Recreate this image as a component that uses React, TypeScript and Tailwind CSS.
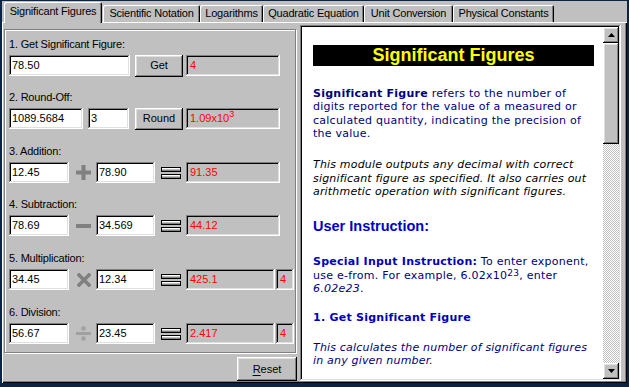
import React from "react";

const raised =
  "shadow-[inset_-1px_-1px_#000,inset_1px_1px_#fff,inset_-2px_-2px_#808080,inset_2px_2px_#dfdfdf]";
const sunken =
  "shadow-[inset_-1px_-1px_#fff,inset_1px_1px_#808080,inset_-2px_-2px_#dfdfdf,inset_2px_2px_#000]";

function Field({ w, v }: { w: string; v: string }) {
  return (
    <div className={`h-[21px] ${w} bg-white ${sunken} flex items-center pl-[3px] text-black shrink-0`}>
      {v}
    </div>
  );
}

function Out({ w, children }: { w: string; children: React.ReactNode }) {
  return (
    <div className={`h-[21px] ${w} bg-[#c0c0c0] ${sunken} flex items-center pl-[4px] text-[#ff0000] shrink-0`}>
      {children}
    </div>
  );
}

function Btn({ label }: { label: string }) {
  return (
    <div className={`h-[22px] w-[48px] bg-[#c0c0c0] ${raised} flex items-center justify-center text-black shrink-0`}>
      {label}
    </div>
  );
}

function Equals() {
  return (
    <svg width="20" height="12" viewBox="0 0 20 12" className="shrink-0">
      <rect x="0" y="0" width="20" height="5" fill="#000" />
      <rect x="1" y="1" width="18" height="1" fill="#fff" />
      <rect x="1" y="2" width="18" height="1" fill="#c0c0c0" />
      <rect x="1" y="3" width="18" height="1" fill="#808080" />
      <rect x="0" y="7" width="20" height="5" fill="#000" />
      <rect x="1" y="8" width="18" height="1" fill="#fff" />
      <rect x="1" y="9" width="18" height="1" fill="#c0c0c0" />
      <rect x="1" y="10" width="18" height="1" fill="#808080" />
    </svg>
  );
}

function Plus() {
  return (
    <svg width="15" height="15" viewBox="0 0 15 15" className="shrink-0">
      <path d="M5.5 0h4v5.5H15v4H9.5V15h-4V9.5H0v-4h5.5z" fill="#808080" />
    </svg>
  );
}
function Minus() {
  return (
    <svg width="15" height="4" viewBox="0 0 15 4" className="shrink-0">
      <rect x="0" y="0" width="15" height="4" fill="#808080" />
    </svg>
  );
}
function Times() {
  return (
    <svg width="14" height="14" viewBox="0 0 14 14" className="shrink-0">
      <path d="M2 2L12 12M12 2L2 12" stroke="#808080" strokeWidth="3.6" strokeLinecap="square" />
    </svg>
  );
}
function Divide() {
  return (
    <svg width="15" height="15" viewBox="0 0 15 15" className="shrink-0">
      <rect x="0" y="6" width="15" height="3" fill="#a0a0a0" />
      <rect x="5.5" y="0.5" width="4" height="4" fill="#a0a0a0" />
      <rect x="5.5" y="10.5" width="4" height="4" fill="#a0a0a0" />
    </svg>
  );
}

function Label({ text, mt }: { text: string; mt: string }) {
  return <div className={`${mt} h-[13px] leading-[13px] tracking-[-0.2px] text-black`}>{text}</div>;
}

function OpRow({
  a,
  b,
  op,
  res,
  sig,
}: {
  a: string;
  b: string;
  op: React.ReactNode;
  res: string;
  sig?: string;
}) {
  return (
    <div className="mt-[4px] flex items-center h-[21px]">
      <Field w="w-[60px]" v={a} />
      <div className="w-[27px] flex justify-center pl-[2px] shrink-0">{op}</div>
      <Field w="w-[59px]" v={b} />
      <div className="ml-[6px] mr-[5px]">
        <Equals />
      </div>
      {sig ? (
        <>
          <Out w="w-[89px]">{res}</Out>
          <div className="ml-[1px]">
            <Out w="w-[18px]">{sig}</Out>
          </div>
        </>
      ) : (
        <Out w="w-[94px]">{res}</Out>
      )}
    </div>
  );
}

function ScrollBtn({ up }: { up: boolean }) {
  return (
    <div className={`h-[16px] w-[16px] bg-[#c0c0c0] ${raised} flex items-center justify-center shrink-0`}>
      <svg width="7" height="4" viewBox="0 0 7 4">
        {up ? <path d="M3.5 0L7 4H0z" fill="#000" /> : <path d="M0 0H7L3.5 4z" fill="#000" />}
      </svg>
    </div>
  );
}

const tabs = [
  { t: "Scientific Notation", w: "w-[97px]" },
  { t: "Logarithms", w: "w-[63px]" },
  { t: "Quadratic Equation", w: "w-[101px]" },
  { t: "Unit Conversion", w: "w-[89px]" },
  { t: "Physical Constants", w: "w-[101px]" },
];

export default function App() {
  return (
    <div className="w-[629px] h-[387px] bg-[#0b2344] pl-[2px] pr-[2px] pt-[1px] pb-[4px] font-['Liberation_Sans',Arial,sans-serif] text-[11px] overflow-hidden">
      <div className="w-full h-full bg-[#c0c0c0] flex flex-col">
        {/* tab strip */}
        <div className="h-[21px] flex items-end pl-[2px] shrink-0">
          <div
            className={`relative z-10 -mb-px h-[21px] w-[98px] bg-[#c0c0c0] rounded-t-[2px] shadow-[inset_1px_1px_#fff,inset_-1px_0_#000,inset_-2px_0_#808080] flex justify-center pt-[3px] leading-[13px] tracking-[-0.2px] text-black`}
          >
            Significant Figures
          </div>
          <div className="w-[1px]" />
          {tabs.map((x) => (
            <div
              key={x.t}
              className={`h-[17px] ${x.w} bg-[#c0c0c0] rounded-t-[2px] shadow-[inset_1px_1px_#fff,inset_-1px_0_#000,inset_-2px_0_#808080] flex justify-center pt-[2px] leading-[13px] tracking-[-0.2px] text-black shrink-0`}
            >
              {x.t}
            </div>
          ))}
        </div>
        {/* tab page */}
        <div className="flex-1 flex pl-[2px] pt-[3px] shadow-[inset_1px_1px_#fff,inset_-1px_-1px_#000,inset_-2px_-2px_#808080]">
          {/* left column */}
          <div className="w-[294px] flex flex-col shrink-0">
            <div className="mt-[4px] w-[292px] h-[324px] border border-[#808080] shadow-[1px_1px_#fff,inset_1px_1px_#fff] pl-[4px] pt-[8px] flex flex-col">
              <Label text="1. Get Significant Figure:" mt="mt-0" />
              <div className="mt-[4px] flex items-center h-[21px]">
                <Field w="w-[121px]" v="78.50" />
                <div className="ml-[5px]">
                  <Btn label="Get" />
                </div>
                <div className="ml-[3px]">
                  <Out w="w-[94px]">4</Out>
                </div>
              </div>

              <Label text="2. Round-Off:" mt="mt-[15px]" />
              <div className="mt-[4px] flex items-center h-[21px]">
                <Field w="w-[74px]" v="1089.5684" />
                <div className="ml-[5px]">
                  <Field w="w-[41px]" v="3" />
                </div>
                <div className="ml-[6px]">
                  <Btn label="Round" />
                </div>
                <div className="ml-[3px]">
                  <Out w="w-[94px]">
                    <span>
                      1.09x10<sup className="text-[9px] leading-none relative -top-[5px] align-baseline">3</sup>
                    </span>
                  </Out>
                </div>
              </div>

              <Label text="3. Addition:" mt="mt-[16px]" />
              <OpRow a="12.45" b="78.90" op={<Plus />} res="91.35" />

              <Label text="4. Subtraction:" mt="mt-[15px]" />
              <OpRow a="78.69" b="34.569" op={<Minus />} res="44.12" />

              <Label text="5. Multiplication:" mt="mt-[16px]" />
              <OpRow a="34.45" b="12.34" op={<Times />} res="425.1" sig="4" />

              <Label text="6. Division:" mt="mt-[16px]" />
              <OpRow a="56.67" b="23.45" op={<Divide />} res="2.417" sig="4" />
            </div>
            <div className="mt-[4px] self-end mr-[1px]">
              <div className={`h-[24px] w-[60px] bg-[#c0c0c0] ${raised} flex items-center justify-center text-black`}>
                <span>
                  <span className="underline underline-offset-[2px]">R</span>eset
                </span>
              </div>
            </div>
          </div>
          {/* right panel */}
          <div className={`ml-[2px] w-[321px] h-[356px] p-[2px] ${sunken} flex shrink-0`}>
            <div className="flex-1 bg-white overflow-hidden pl-[11px] pr-[9px] font-['DejaVu_Sans',Verdana,sans-serif] text-[11px] leading-[13.33px] tracking-[0.25px] text-[#000080] whitespace-nowrap">
              <div className="mt-[18px] h-[21px] bg-black flex items-center justify-center text-[#ffff00] font-bold text-[18px] tracking-normal font-['Liberation_Sans',Arial,sans-serif] leading-[21px]">
                Significant Figures
              </div>
              <div className="mt-[21px]">
                <b>Significant Figure</b> refers to the number of
                <br />
                digits reported for the value of a measured or
                <br />
                calculated quantity, indicating the precision of
                <br />
                the value.
              </div>
              <div className="mt-[18px] italic text-black tracking-[0.18px]">
                This module outputs any decimal with correct
                <br />
                significant figure as specified. It also carries out
                <br />
                arithmetic operation with significant figures.
              </div>
              <div className="mt-[20px] font-bold text-[14.5px] leading-[17px] tracking-normal text-[#0000c8] font-['Liberation_Sans',Arial,sans-serif]">
                User Instruction:
              </div>
              <div className="mt-[20px]">
                <b className="text-[#0000c0]">Special Input Instruction:</b> To enter exponent,
                <br />
                use e-from. For example, 6.02x10
                <sup className="text-[9px] leading-none relative -top-[3px] align-baseline">23</sup>, enter
                <br />
                <i>6.02e23</i>.
              </div>
              <div className="mt-[16px] font-bold text-[#0000c0]">1. Get Significant Figure</div>
              <div className="mt-[16px] italic tracking-[0.18px]">
                This calculates the number of significant figures
                <br />
                in any given number.
              </div>
            </div>
            <div className="w-[16px] flex flex-col shrink-0">
              <ScrollBtn up />
              <div className={`h-[101px] bg-[#c0c0c0] ${raised} shrink-0`} />
              <div className="flex-1 bg-[repeating-conic-gradient(#c0c0c0_0%_25%,#ffffff_0%_50%)] bg-[length:2px_2px]" />
              <ScrollBtn up={false} />
            </div>
          </div>
        </div>
      </div>
    </div>
  );
}
